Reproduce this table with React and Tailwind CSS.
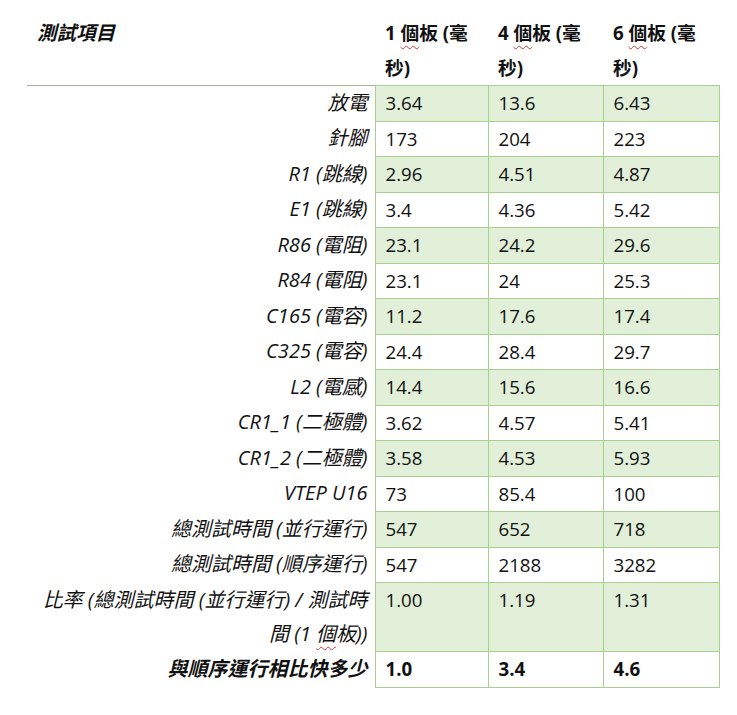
const rows = [
  { label: "放電", v: ["3.64", "13.6", "6.43"] },
  { label: "針腳", v: ["173", "204", "223"] },
  { label: "R1 (跳線)", v: ["2.96", "4.51", "4.87"] },
  { label: "E1 (跳線)", v: ["3.4", "4.36", "5.42"] },
  { label: "R86 (電阻)", v: ["23.1", "24.2", "29.6"] },
  { label: "R84 (電阻)", v: ["23.1", "24", "25.3"] },
  { label: "C165 (電容)", v: ["11.2", "17.6", "17.4"] },
  { label: "C325 (電容)", v: ["24.4", "28.4", "29.7"] },
  { label: "L2 (電感)", v: ["14.4", "15.6", "16.6"] },
  { label: "CR1_1 (二極體)", v: ["3.62", "4.57", "5.41"] },
  { label: "CR1_2 (二極體)", v: ["3.58", "4.53", "5.93"] },
  { label: "VTEP U16", v: ["73", "85.4", "100"] },
  { label: "總測試時間 (並行運行)", v: ["547", "652", "718"] },
  { label: "總測試時間 (順序運行)", v: ["547", "2188", "3282"] },
  {
    label: (
      <>
        比率 (總測試時間 (並行運行) / 測試時
        <br />
        間 (1 <Squiggle>個</Squiggle>板))
      </>
    ),
    v: ["1.00", "1.19", "1.31"],
  },
  { label: "與順序運行相比快多少", v: ["1.0", "3.4", "4.6"], bold: true },
];

function Squiggle({ children }) {
  return (
    <span className="underline decoration-wavy decoration-[#d03a2a] decoration-1 underline-offset-[5px]">
      {children}
    </span>
  );
}

function HeadCell({ n }) {
  return (
    <th className="px-[10px] pt-[16px] pb-0 text-left align-top font-bold">
      {n} <Squiggle>個</Squiggle>板 (毫
      <br />
      秒)
    </th>
  );
}

export default function App() {
  return (
    <div
      className="h-[715px] w-[737px] bg-white pl-[27px] text-[#111] text-[18.7px] leading-[34.5px]"
      style={{ fontFamily: '"Open Sans", "Noto Sans CJK TC", sans-serif' }}
    >
      <table className="table-fixed border-collapse w-[692px]">
        <colgroup>
          <col className="w-[348px]" />
          <col className="w-[113px]" />
          <col className="w-[115px]" />
          <col className="w-[116px]" />
        </colgroup>
        <thead>
          <tr className="border-b border-[#a9b394]">
            <th className="px-[10px] pt-[16px] text-left align-top text-[19.5px] font-bold italic">
              測試項目
            </th>
            <HeadCell n="1" />
            <HeadCell n="4" />
            <HeadCell n="6" />
          </tr>
        </thead>
        <tbody>
          {rows.map((r, i) => (
            <tr key={i}>
              <td
                className={
                  "pr-[7px] text-right align-top text-[20px] italic " +
                  (r.bold ? "font-bold" : "")
                }
              >
                {r.label}
              </td>
              {r.v.map((x, j) => (
                <td
                  key={j}
                  className={
                    "border border-[#a8d08d] px-[10px] align-top " +
                    (i % 2 === 0 ? "bg-[#e2efd9] " : "bg-white ") +
                    (r.bold ? "font-bold" : "")
                  }
                >
                  {x}
                </td>
              ))}
            </tr>
          ))}
        </tbody>
      </table>
    </div>
  );
}
